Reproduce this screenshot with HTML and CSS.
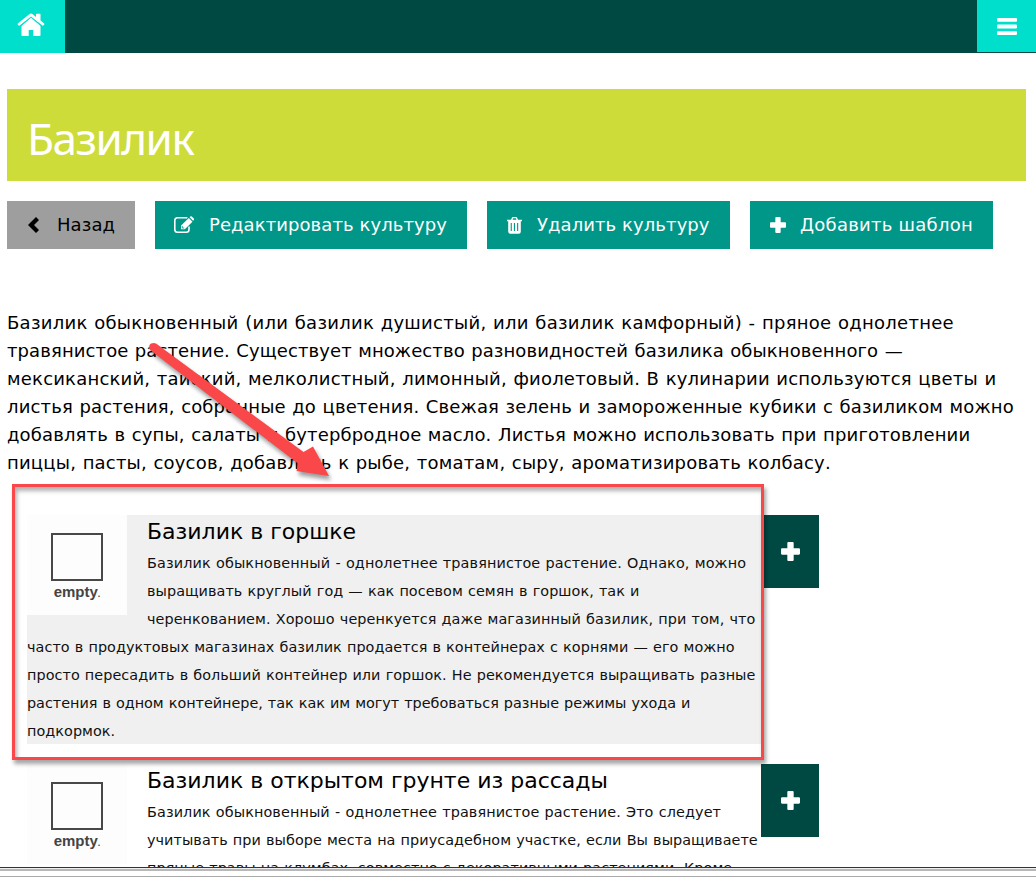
FILE: index.html
```html
<!DOCTYPE html>
<html lang="ru">
<head>
<meta charset="utf-8">
<title>Базилик</title>
<link rel="stylesheet" href="styles.css">
</head>
<body>
<svg class="defs" aria-hidden="true">
  <symbol id="plus" viewBox="0 0 18 18"><path d="M7 0h4q1 0 1 1v5h5q1 0 1 1v4q0 1-1 1h-5v5q0 1-1 1H7q-1 0-1-1v-5H1q-1 0-1-1V7q0-1 1-1h5V1q0-1 1-1z"/></symbol>
</svg>
<div class="page">
  <header class="topbar">
    <a class="home"><svg width="28" height="24" viewBox="0 0 28 24"><path d="M14 4.800 4.500 13v9.200q0 .8.8.8h6.400v-6h4.600v6h6.400q.8 0 .8-.8V13z"/><path d="M14 0.500q.7 0 1.400.6L19 4V1.200q0-.5.5-.5h3.500q.5 0 .5.5v6.300l3.700 3.100q.5.400.1.900l-1 1.100q-.4.400-.9 0L14 3.500 2.600 12.600q-.5.400-.9 0l-1-1.100q-.4-.5.1-.9L12.600 1.100q.7-.6 1.400-.6z"/></svg></a>
    <a class="menu"><svg width="20" height="17" viewBox="0 0 20 17"><rect width="20" height="3.800" rx="1"/><rect y="6.600" width="20" height="3.800" rx="1"/><rect y="13.200" width="20" height="3.800" rx="1"/></svg></a>
  </header>
  <main class="content">
    <h1 class="title"><span>Базилик</span></h1>
    <nav class="actions">
      <a class="btn back"><svg width="12" height="18" viewBox="0 0 12 18"><path d="M9 1 1 9l8 8 3-3-5-5 5-5z"/></svg><span>Назад</span></a>
      <a class="btn edit"><svg width="20" height="18" viewBox="0 0 20 18"><path d="M15 10.500V13.500q0 2.700-2.700 2.700H3.500Q.8 16.200.8 13.500V4.500Q.8 1.800 3.500 1.800h8.800q.6 0 1 .2" fill="none" stroke="currentColor" stroke-width="1.600"/><path d="M14.800 2 18.500 5.700 10.800 13.200H7.100V9.500zM15.600 1.200l.7-.7q.8-.7 1.500 0l2 2q.7.700 0 1.500l-.7.700z"/><path d="M8.300 10v2h2" fill="none" stroke="#009688" stroke-width=".8"/></svg><span>Редактировать культуру</span></a>
      <a class="btn del"><svg width="15" height="17" viewBox="0 0 15 17"><path fill-rule="evenodd" d="M0 2.700h4L5 .5Q5.300 0 6 0h3q.7 0 1 .5l1 2.200h4v1.500h-1.200v10.300q0 2.200-2 2.200H3.200q-2 0-2-2.200V4.200H0zm5.600 0h3.800L8.800 1.300H6.200zM3.700 6v8h1.100V6zm3.200 0v8H8V6zm3.200 0v8h1.100V6z"/></svg><span>Удалить культуру</span></a>
      <a class="btn add"><svg width="16" height="16"><use href="#plus"/></svg><span>Добавить шаблон</span></a>
    </nav>
    <p class="intro">
      <span class="t27">Базилик обыкновенный (или базилик душистый, или базилик камфорный) - пряное однолетнее</span>
      <span class="t10">травянистое растение. Существует множество разновидностей базилика обыкновенного —</span>
      <span class="t20">мексиканский, тайский, мелколистный, лимонный, фиолетовый. В кулинарии используются цветы и</span>
      <span class="t15">листья растения, собранные до цветения. Свежая зелень и замороженные кубики с базиликом можно</span>
      <span class="t15">добавлять в супы, салаты и бутербродное масло. Листья можно использовать при приготовлении</span>
      <span class="t20">пиццы, пасты, соусов, добавлять к рыбе, томатам, сыру, ароматизировать колбасу.</span>
    </p>
    <section class="list">
      <div class="row">
        <article class="card shaded">
          <div class="thumb"><i></i><b>empty<small>.</small></b></div>
          <h2>Базилик в горшке</h2>
          <p>
            <span class="t12">Базилик обыкновенный - однолетнее травянистое растение. Однако, можно</span>
            <span class="t05">выращивать круглый год — как посевом семян в горшок, так и</span>
            <span class="t07">черенкованием. Хорошо черенкуется даже магазинный базилик, при том, что</span>
            <span class="t05">часто в продуктовых магазинах базилик продается в контейнерах с корнями — его можно</span>
            <span class="t05">просто пересадить в больший контейнер или горшок. Не рекомендуется выращивать разные</span>
            <span class="t00">растения в одном контейнере, так как им могут требоваться разные режимы ухода и</span>
            <span class="t05">подкормок.</span>
          </p>
        </article>
        <a class="plus"><svg width="19" height="19"><use href="#plus"/></svg></a>
      </div>
      <div class="row">
        <article class="card">
          <div class="thumb"><i></i><b>empty<small>.</small></b></div>
          <h2>Базилик в открытом грунте из рассады</h2>
          <p>
            <span class="t10">Базилик обыкновенный - однолетнее травянистое растение. Это следует</span>
            <span class="t05">учитывать при выборе места на приусадебном участке, если Вы выращиваете</span>
            <span class="t05">пряные травы на клумбах, совместно с декоративными растениями. Кроме</span>
          </p>
        </article>
        <a class="plus"><svg width="19" height="19"><use href="#plus"/></svg></a>
      </div>
    </section>
  </main>
  <footer class="frame"></footer>
  <div class="highlight"></div>
  <svg class="arrow" width="200" height="150" viewBox="140 335 200 150"><path d="M156 343.500 303.500 452 313 446.500 329 476 296.500 471 298 463.500 150 350Q148 345 151 343.500 154 342.500 156 343.500z"/></svg>
</div>
</body>
</html>
```
FILE: styles.css
```css
* { box-sizing: border-box; }
body { margin: 0; background: #fff; color: #000; font-family: "DejaVu Sans", Verdana, sans-serif; }
svg { fill: currentColor; display: block; }
.defs { position: absolute; width: 0; height: 0; }
.page { position: relative; height: 877px; display: flex; flex-direction: column; overflow: hidden; }
.topbar { flex: none; height: 53px; background: #004943; display: flex; justify-content: space-between; align-items: flex-start; color: #fff; }
.home, .menu { display: flex; align-items: center; justify-content: center; background: #00dfcc; }
.home { width: 65px; height: 53px; padding: 0 3px 4px 0; }
.menu { width: 59px; height: 52px; }
.content { flex: 1; min-height: 0; overflow: hidden; padding: 36px 10px 0 7px; }
.title { margin: 0; height: 92px; padding: 1px 20px 0; background: #cddc39; color: #fff; font: 400 44px/96px "Noto Sans", "Open Sans", sans-serif; letter-spacing: -1.5px; }
.actions { display: flex; gap: 20px; margin-top: 20px; }
.btn { height: 48px; padding: 0 0 0 20px; display: flex; align-items: center; background: #009688; color: #fff; font-size: 18px; white-space: nowrap; }
.btn span { padding-bottom: 2px; letter-spacing: .08px; }
.back { width: 128px; background: #9e9e9e; color: #000; gap: 18px; }
.edit { width: 312px; gap: 14px; }
.edit svg { margin-left: -1px; margin-right: 1px; }
.del { width: 243px; gap: 15px; }
.add { width: 243px; gap: 14px; }
.add span { letter-spacing: .25px; }
.intro { margin: 60px 0 0; font-size: 18px; line-height: 28px; word-spacing: .6px; }
.intro span, .card p span { display: block; white-space: nowrap; }
.t00 { letter-spacing: -.02px; }
.t05 { letter-spacing: .05px; }
.t07 { letter-spacing: .07px; }
.t10 { letter-spacing: .1px; }
.t12 { letter-spacing: .12px; }
.t15 { letter-spacing: .15px; }
.t20 { letter-spacing: .2px; }
.t27 { letter-spacing: .27px; }
.list { display: flex; flex-direction: column; gap: 20px; margin-top: 38px; padding-left: 20px; }
.row { display: flex; align-items: flex-start; }
.card { width: 734px; height: 229px; }
.shaded { background: #f0f0f0; }
.card h2 { margin: 0; font-size: 22px; line-height: 33px; font-weight: 400; white-space: nowrap; }
.card p { margin: 0; padding-top: 1px; font-size: 14.4px; line-height: 28px; color: #111; word-spacing: .5px; }
.thumb { float: left; width: 100px; height: 100px; margin: 0 20px 10px 0; padding-top: 18px; background: #fdfdfd; display: flex; flex-direction: column; align-items: center; }
.thumb i { width: 52px; height: 48px; border: 2px solid #484848; }
.thumb b { font: 700 15px/21px "Liberation Sans", Arial, sans-serif; color: #444; }
.thumb small { font-size: 9px; }
.plus { width: 58px; height: 73px; display: flex; align-items: center; justify-content: center; background: #004943; color: #fff; }
.frame { flex: none; height: 10px; border-top: 1px solid #333; border-bottom: 1px solid #aaa; background: linear-gradient(#eee 1px, #b8b8b8 1px, #b8b8b8 3px, #fff 3px); }
.highlight { position: absolute; left: 12px; top: 484px; width: 752px; height: 276px; border: 3px solid #fa474a; box-shadow: 2px 4px 4px rgba(0,0,0,.35), inset 2px 4px 4px rgba(0,0,0,.3); }
.arrow { position: absolute; left: 140px; top: 335px; color: #fa474a; filter: drop-shadow(2px 4px 2px rgba(0,0,0,.4)); }
```
